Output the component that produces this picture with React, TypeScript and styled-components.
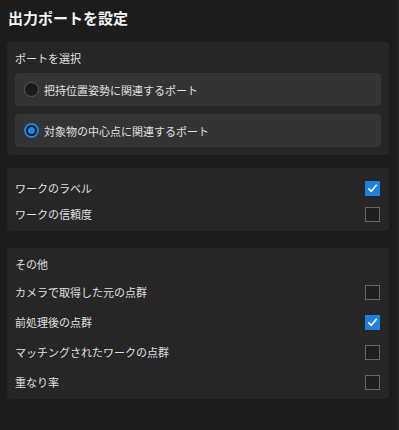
import React from 'react';
import styled, { createGlobalStyle } from 'styled-components';

const GlobalStyle = createGlobalStyle`
  html, body {
    margin: 0;
    padding: 0;
    background: #1c1c1c;
  }
  body {
    font-family: "Noto Sans CJK JP", "Noto Sans", sans-serif;
    color: #dedede;
  }
`;

const Page = styled.div`
  box-sizing: border-box;
  width: 399px;
  height: 430px;
  padding: 8px 8px 0 7px;
  background: #1c1c1c;
  border-right: 2px solid #262626;
  display: flex;
  flex-direction: column;
`;

const Title = styled.h1`
  margin: 0 0 14px 1px;
  font-size: 15px;
  line-height: 20px;
  font-weight: 700;
  color: #f2f2f2;
`;

const Card = styled.section<{ top?: number; padTop?: number; padBottom?: number }>`
  box-sizing: border-box;
  width: 382px;
  margin-top: ${({ top }) => top ?? 0}px;
  padding: ${({ padTop }) => padTop ?? 8}px 9px ${({ padBottom }) => padBottom ?? 8}px 8px;
  background: #262626;
  border-radius: 4px;
  display: flex;
  flex-direction: column;
`;

const CardHeader = styled.div`
  font-size: 11px;
  line-height: 16px;
  height: 16px;
  color: #e0e0e0;
`;

const Options = styled.div`
  margin-top: 7px;
  display: flex;
  flex-direction: column;
  gap: 8px;
`;

const Option = styled.label`
  box-sizing: border-box;
  height: 33px;
  width: 366px;
  padding-left: 9px;
  background: #343434;
  border-radius: 4px;
  display: flex;
  align-items: center;
  gap: 5px;
  font-size: 11px;
  color: #e0e0e0;
`;

const Radio = styled.span<{ checked?: boolean }>`
  box-sizing: border-box;
  width: 15px;
  height: 15px;
  border-radius: 50%;
  flex-shrink: 0;
  background: #1a1a1a;
  border: ${({ checked }) => (checked ? '2px solid #1f86e3' : '1px solid #585858')};
  display: flex;
  align-items: center;
  justify-content: center;

  &::after {
    content: '';
    display: ${({ checked }) => (checked ? 'block' : 'none')};
    width: 7px;
    height: 7px;
    border-radius: 50%;
    background: #1f86e3;
  }
`;

const Rows = styled.div<{ gapTop?: number }>`
  margin-top: ${({ gapTop }) => gapTop ?? 0}px;
  display: flex;
  flex-direction: column;
`;

const Row = styled.div<{ h: number }>`
  height: ${({ h }) => h}px;
  display: flex;
  align-items: center;
  justify-content: space-between;
  font-size: 11px;
  color: #e0e0e0;
`;

const Box = styled.span<{ checked?: boolean }>`
  box-sizing: border-box;
  width: 15px;
  height: 15px;
  flex-shrink: 0;
  background: ${({ checked }) => (checked ? '#1f80dd' : '#1e1e1e')};
  border: ${({ checked }) => (checked ? 'none' : '1px solid #666')};
  display: flex;
  align-items: center;
  justify-content: center;
`;

const Check = () => (
  <svg width="11" height="11" viewBox="0 0 11 11">
    <path d="M1.8 5.8 L4.3 8.3 L9.3 2.3" fill="none" stroke="#f4f8ff" strokeWidth="1.7" strokeLinecap="round" strokeLinejoin="round" />
  </svg>
);

const CheckBox: React.FC<{ checked?: boolean }> = ({ checked }) => (
  <Box checked={checked}>{checked && <Check />}</Box>
);

const workItems = [
  { label: 'ワークのラベル', checked: true },
  { label: 'ワークの信頼度', checked: false },
];

const otherItems = [
  { label: 'カメラで取得した元の点群', checked: false },
  { label: '前処理後の点群', checked: true },
  { label: 'マッチングされたワークの点群', checked: false },
  { label: '重なり率', checked: false },
];

const App: React.FC = () => {
  return (
    <>
      <GlobalStyle />
      <Page>
        <Title>出力ポートを設定</Title>

        <Card>
          <CardHeader>ポートを選択</CardHeader>
          <Options>
            <Option>
              <Radio />
              把持位置姿勢に関連するポート
            </Option>
            <Option>
              <Radio checked />
              対象物の中心点に関連するポート
            </Option>
          </Options>
        </Card>

        <Card top={13} padTop={7} padBottom={4}>
          <Rows>
            {workItems.map((it) => (
              <Row key={it.label} h={26}>
                {it.label}
                <CheckBox checked={it.checked} />
              </Row>
            ))}
          </Rows>
        </Card>

        <Card top={17} padBottom={2}>
          <CardHeader>その他</CardHeader>
          <Rows gapTop={5}>
            {otherItems.map((it) => (
              <Row key={it.label} h={30}>
                {it.label}
                <CheckBox checked={it.checked} />
              </Row>
            ))}
          </Rows>
        </Card>
      </Page>
    </>
  );
};

export default App;
